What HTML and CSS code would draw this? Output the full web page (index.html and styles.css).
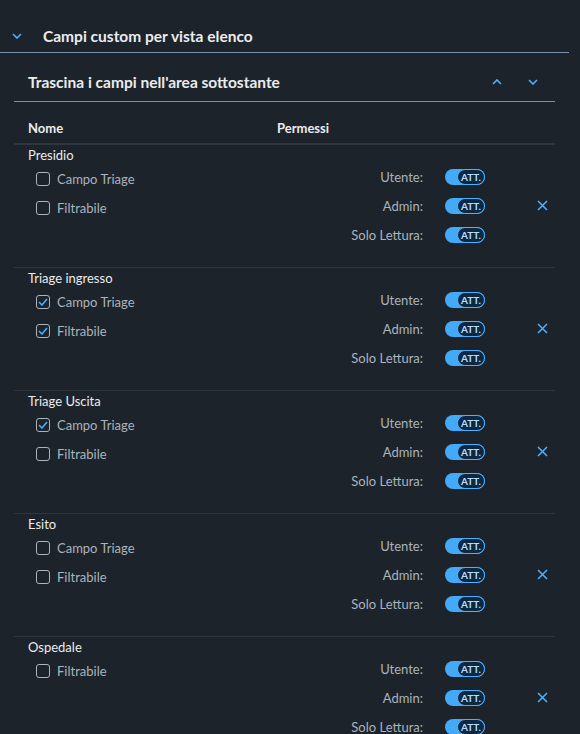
FILE: index.html
```html
<!DOCTYPE html>
<html lang="it">
  <head>
    <meta charset="UTF-8" />
    <title>Campi custom per vista elenco</title>
    <link rel="stylesheet" href="styles.css">
  </head>
  <body>
    <div class="panel">
      <div class="panel-head">
        <svg class="chevron" width="10" height="6" viewBox="0 0 10 6"><path d="M1 1l4 4 4-4" /></svg>
        <h2>Campi custom per vista elenco</h2>
      </div>

      <div class="panel-body">
        <div class="toolbar">
          <h3>Trascina i campi nell'area sottostante</h3>
          <div class="toolbar-actions">
            <button class="icon-btn"><svg class="chevron" width="10" height="6" viewBox="0 0 10 6"><path d="M1 5l4-4 4 4" /></svg></button>
            <button class="icon-btn"><svg class="chevron" width="10" height="6" viewBox="0 0 10 6"><path d="M1 1l4 4 4-4" /></svg></button>
          </div>
        </div>

        <div class="table-head">
          <span>Nome</span>
          <span>Permessi</span>
        </div>

        <div class="group">
          <div class="fields">
            <div class="group-title">Presidio</div>
            <label class="check"><span class="box"></span>Campo Triage</label>
            <label class="check"><span class="box"></span>Filtrabile</label>
          </div>
          <div class="perms">
            <span class="perm-label">Utente:</span><span class="switch"><span class="handle">ATT.</span></span>
            <span class="perm-label">Admin:</span><span class="switch"><span class="handle">ATT.</span></span>
            <span class="perm-label">Solo Lettura:</span><span class="switch"><span class="handle">ATT.</span></span>
          </div>
          <button class="remove"><svg width="11" height="11" viewBox="0 0 11 11"><path d="M1 1l9 9M10 1l-9 9" /></svg></button>
        </div>

        <div class="group">
          <div class="fields">
            <div class="group-title">Triage ingresso</div>
            <label class="check"><span class="box checked"><svg width="10" height="8" viewBox="0 0 10 8"><path d="M1 4l3 3 5-6" /></svg></span>Campo Triage</label>
            <label class="check"><span class="box checked"><svg width="10" height="8" viewBox="0 0 10 8"><path d="M1 4l3 3 5-6" /></svg></span>Filtrabile</label>
          </div>
          <div class="perms">
            <span class="perm-label">Utente:</span><span class="switch"><span class="handle">ATT.</span></span>
            <span class="perm-label">Admin:</span><span class="switch"><span class="handle">ATT.</span></span>
            <span class="perm-label">Solo Lettura:</span><span class="switch"><span class="handle">ATT.</span></span>
          </div>
          <button class="remove"><svg width="11" height="11" viewBox="0 0 11 11"><path d="M1 1l9 9M10 1l-9 9" /></svg></button>
        </div>

        <div class="group">
          <div class="fields">
            <div class="group-title">Triage Uscita</div>
            <label class="check"><span class="box checked"><svg width="10" height="8" viewBox="0 0 10 8"><path d="M1 4l3 3 5-6" /></svg></span>Campo Triage</label>
            <label class="check"><span class="box"></span>Filtrabile</label>
          </div>
          <div class="perms">
            <span class="perm-label">Utente:</span><span class="switch"><span class="handle">ATT.</span></span>
            <span class="perm-label">Admin:</span><span class="switch"><span class="handle">ATT.</span></span>
            <span class="perm-label">Solo Lettura:</span><span class="switch"><span class="handle">ATT.</span></span>
          </div>
          <button class="remove"><svg width="11" height="11" viewBox="0 0 11 11"><path d="M1 1l9 9M10 1l-9 9" /></svg></button>
        </div>

        <div class="group">
          <div class="fields">
            <div class="group-title">Esito</div>
            <label class="check"><span class="box"></span>Campo Triage</label>
            <label class="check"><span class="box"></span>Filtrabile</label>
          </div>
          <div class="perms">
            <span class="perm-label">Utente:</span><span class="switch"><span class="handle">ATT.</span></span>
            <span class="perm-label">Admin:</span><span class="switch"><span class="handle">ATT.</span></span>
            <span class="perm-label">Solo Lettura:</span><span class="switch"><span class="handle">ATT.</span></span>
          </div>
          <button class="remove"><svg width="11" height="11" viewBox="0 0 11 11"><path d="M1 1l9 9M10 1l-9 9" /></svg></button>
        </div>

        <div class="group">
          <div class="fields">
            <div class="group-title">Ospedale</div>
            <label class="check"><span class="box"></span>Filtrabile</label>
          </div>
          <div class="perms">
            <span class="perm-label">Utente:</span><span class="switch"><span class="handle">ATT.</span></span>
            <span class="perm-label">Admin:</span><span class="switch"><span class="handle">ATT.</span></span>
            <span class="perm-label">Solo Lettura:</span><span class="switch"><span class="handle">ATT.</span></span>
          </div>
          <button class="remove"><svg width="11" height="11" viewBox="0 0 11 11"><path d="M1 1l9 9M10 1l-9 9" /></svg></button>
        </div>
      </div>
    </div>
  </body>
</html>
```

FILE: styles.css
```css
* {
  margin: 0;
  padding: 0;
  box-sizing: border-box;
}

body {
  font-family: Lato, 'Noto Sans', sans-serif;
  background-color: #1d232a;
  color: #eaecee;
  font-size: 13px;
  overflow: hidden;
}

.panel {
  width: 569px;
}

.chevron path {
  fill: none;
  stroke: #4db1ff;
  stroke-width: 1.6;
}

/* section header */
.panel-head {
  display: flex;
  align-items: center;
  height: 53px;
  padding: 20px 0 0 12px;
  border-bottom: 1px solid #7a90a8;
}

.panel-head h2 {
  font-size: 15.5px;
  font-weight: 700;
  margin-left: 21px;
  line-height: 18px;
}

.panel-body {
  margin-left: 14px;
  width: 541px;
}

/* drag area toolbar */
.toolbar {
  display: flex;
  align-items: center;
  justify-content: space-between;
  height: 49px;
  padding: 9px 4px 0 14px;
  border-bottom: 1px solid #7a90a8;
}

.toolbar h3 {
  font-size: 15.5px;
  font-weight: 700;
  line-height: 18px;
}

.toolbar-actions {
  display: flex;
}

.icon-btn {
  width: 36px;
  height: 26px;
  background: none;
  border: none;
  display: flex;
  align-items: center;
  justify-content: center;
}

.table-head {
  display: grid;
  grid-template-columns: 249px 1fr;
  padding: 17px 0 6px 14px;
  line-height: 18px;
  font-weight: 700;
  border-bottom: 2px solid #2e353d;
}

/* one field group */
.group {
  display: flex;
  align-items: flex-start;
  padding: 0 0 18px 14px;
  border-bottom: 1px solid #2e353d;
}

.group:first-of-type {
  padding-top: 1px;
}

.fields {
  flex: 1;
}

.group-title {
  line-height: 16px;
  height: 16px;
  margin-top: 2px;
  margin-bottom: 1px;
}

.check {
  display: flex;
  align-items: center;
  height: 29px;
  padding-left: 8px;
  color: #a9b4be;
}

.box {
  width: 14px;
  height: 14px;
  border: 1px solid #a9b4be;
  border-radius: 3px;
  margin-right: 7px;
  display: flex;
  align-items: center;
  justify-content: center;
}

.box path {
  fill: none;
  stroke: #4db1ff;
  stroke-width: 1.5;
}

.perms {
  display: grid;
  grid-template-columns: auto 40px;
  grid-auto-rows: 29px;
  column-gap: 22px;
  align-items: center;
  margin-top: 17px;
}

.perm-label {
  text-align: right;
  color: #a9b4be;
}

.switch {
  display: flex;
  justify-content: flex-end;
  width: 40px;
  height: 16px;
  border-radius: 8px;
  background: #43aaf7;
}

.handle {
  width: 28px;
  height: 16px;
  border-radius: 8px;
  background: #0d2843;
  border: 1px solid #4db1ff;
  color: #b9dcfb;
  font-size: 10px;
  font-weight: 700;
  line-height: 14px;
  text-align: center;
}

.remove {
  width: 26px;
  height: 26px;
  margin: 47px 0 0 44px;
  background: none;
  border: none;
  display: flex;
  align-items: center;
  justify-content: center;
}

.remove path {
  stroke: #4db1ff;
  stroke-width: 1.5;
}
```
